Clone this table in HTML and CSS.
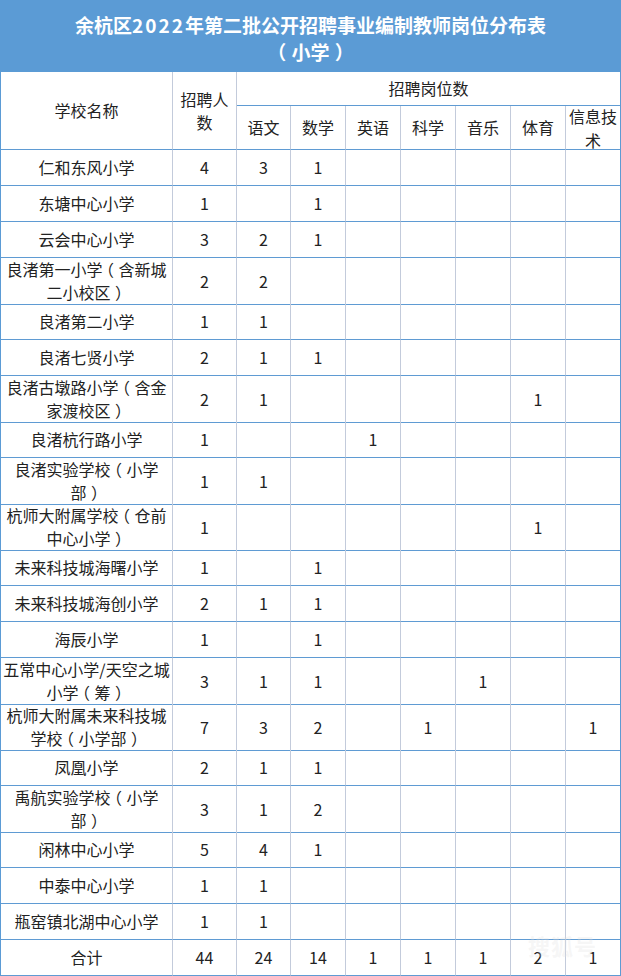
FILE: index.html
```html
<!DOCTYPE html>
<html lang="zh-CN">
<head>
<meta charset="utf-8">
<title>余杭区2022年第二批公开招聘事业编制教师岗位分布表（小学）</title>
<link rel="stylesheet" href="styles.css">
</head>
<body>
<div class="page">
  <header class="title">
    <div>余杭区<span class="num">2022</span>年第二批公开招聘事业编制教师岗位分布表</div>
    <div><span class="op">（</span>小学<span class="cp">）</span></div>
  </header>

  <div class="head">
    <div class="c h-name">学校名称</div>
    <div class="c h-total">招聘人<br>数</div>
    <div class="c h-group e">招聘岗位数</div>
    <div class="c">语文</div>
    <div class="c">数学</div>
    <div class="c">英语</div>
    <div class="c">科学</div>
    <div class="c">音乐</div>
    <div class="c">体育</div>
    <div class="c e h-it">信息技<br>术</div>
  </div>

  <div class="row"><div class="c">仁和东风小学</div><div class="c">4</div><div class="c">3</div><div class="c">1</div><div class="c"></div><div class="c"></div><div class="c"></div><div class="c"></div><div class="c e"></div></div>
  <div class="row"><div class="c">东塘中心小学</div><div class="c">1</div><div class="c"></div><div class="c">1</div><div class="c"></div><div class="c"></div><div class="c"></div><div class="c"></div><div class="c e"></div></div>
  <div class="row"><div class="c">云会中心小学</div><div class="c">3</div><div class="c">2</div><div class="c">1</div><div class="c"></div><div class="c"></div><div class="c"></div><div class="c"></div><div class="c e"></div></div>
  <div class="row tall"><div class="c"><span class="t">良渚第一小学<span class="op">（</span>含新城<br>二小校区<span class="cp">）</span></span></div><div class="c">2</div><div class="c">2</div><div class="c"></div><div class="c"></div><div class="c"></div><div class="c"></div><div class="c"></div><div class="c e"></div></div>
  <div class="row"><div class="c">良渚第二小学</div><div class="c">1</div><div class="c">1</div><div class="c"></div><div class="c"></div><div class="c"></div><div class="c"></div><div class="c"></div><div class="c e"></div></div>
  <div class="row"><div class="c">良渚七贤小学</div><div class="c">2</div><div class="c">1</div><div class="c">1</div><div class="c"></div><div class="c"></div><div class="c"></div><div class="c"></div><div class="c e"></div></div>
  <div class="row tall"><div class="c"><span class="t">良渚古墩路小学<span class="op">（</span>含金<br>家渡校区<span class="cp">）</span></span></div><div class="c">2</div><div class="c">1</div><div class="c"></div><div class="c"></div><div class="c"></div><div class="c"></div><div class="c">1</div><div class="c e"></div></div>
  <div class="row"><div class="c">良渚杭行路小学</div><div class="c">1</div><div class="c"></div><div class="c"></div><div class="c">1</div><div class="c"></div><div class="c"></div><div class="c"></div><div class="c e"></div></div>
  <div class="row tall"><div class="c"><span class="t">良渚实验学校<span class="op">（</span>小学<br>部<span class="cp">）</span></span></div><div class="c">1</div><div class="c">1</div><div class="c"></div><div class="c"></div><div class="c"></div><div class="c"></div><div class="c"></div><div class="c e"></div></div>
  <div class="row tall"><div class="c"><span class="t">杭师大附属学校<span class="op">（</span>仓前<br>中心小学<span class="cp">）</span></span></div><div class="c">1</div><div class="c"></div><div class="c"></div><div class="c"></div><div class="c"></div><div class="c"></div><div class="c">1</div><div class="c e"></div></div>
  <div class="row"><div class="c">未来科技城海曙小学</div><div class="c">1</div><div class="c"></div><div class="c">1</div><div class="c"></div><div class="c"></div><div class="c"></div><div class="c"></div><div class="c e"></div></div>
  <div class="row"><div class="c">未来科技城海创小学</div><div class="c">2</div><div class="c">1</div><div class="c">1</div><div class="c"></div><div class="c"></div><div class="c"></div><div class="c"></div><div class="c e"></div></div>
  <div class="row"><div class="c">海辰小学</div><div class="c">1</div><div class="c"></div><div class="c">1</div><div class="c"></div><div class="c"></div><div class="c"></div><div class="c"></div><div class="c e"></div></div>
  <div class="row tall"><div class="c"><span class="t">五常中心小学/天空之城<br>小学<span class="op">（</span>筹<span class="cp">）</span></span></div><div class="c">3</div><div class="c">1</div><div class="c">1</div><div class="c"></div><div class="c"></div><div class="c">1</div><div class="c"></div><div class="c e"></div></div>
  <div class="row tall"><div class="c"><span class="t">杭师大附属未来科技城<br>学校<span class="op">（</span>小学部<span class="cp">）</span></span></div><div class="c">7</div><div class="c">3</div><div class="c">2</div><div class="c"></div><div class="c">1</div><div class="c"></div><div class="c"></div><div class="c e">1</div></div>
  <div class="row"><div class="c">凤凰小学</div><div class="c">2</div><div class="c">1</div><div class="c">1</div><div class="c"></div><div class="c"></div><div class="c"></div><div class="c"></div><div class="c e"></div></div>
  <div class="row tall"><div class="c"><span class="t">禹航实验学校<span class="op">（</span>小学<br>部<span class="cp">）</span></span></div><div class="c">3</div><div class="c">1</div><div class="c">2</div><div class="c"></div><div class="c"></div><div class="c"></div><div class="c"></div><div class="c e"></div></div>
  <div class="row"><div class="c">闲林中心小学</div><div class="c">5</div><div class="c">4</div><div class="c">1</div><div class="c"></div><div class="c"></div><div class="c"></div><div class="c"></div><div class="c e"></div></div>
  <div class="row"><div class="c">中泰中心小学</div><div class="c">1</div><div class="c">1</div><div class="c"></div><div class="c"></div><div class="c"></div><div class="c"></div><div class="c"></div><div class="c e"></div></div>
  <div class="row"><div class="c">瓶窑镇北湖中心小学</div><div class="c">1</div><div class="c">1</div><div class="c"></div><div class="c"></div><div class="c"></div><div class="c"></div><div class="c"></div><div class="c e"></div></div>
  <div class="row total"><div class="c">合计</div><div class="c">44</div><div class="c">24</div><div class="c">14</div><div class="c">1</div><div class="c">1</div><div class="c">1</div><div class="c">2</div><div class="c e">1</div></div>

  <div class="watermark">搜狐号</div>
</div>
</body>
</html>
```

FILE: styles.css
```css
html, body {
  margin: 0;
  padding: 0;
  background: #ffffff;
}

.page {
  position: relative;
  width: 621px;
  font-family: "Noto Sans CJK SC", "Noto Sans", sans-serif;
  color: #222222;
  font-size: 16px;
}

.title {
  height: 72px;
  box-sizing: border-box;
  padding-top: 11px;
  background: #5b9bd5;
  color: #ffffff;
  font-weight: bold;
  font-size: 19px;
  line-height: 27px;
  text-align: center;
}

.title .num {
  letter-spacing: 2px;
}

/* centre the full-width brackets in their em box, as the reference font does */
.op {
  margin-left: -0.28em;
  margin-right: 0.28em;
}

.cp {
  margin-left: 0.28em;
  margin-right: -0.28em;
}

.head,
.row {
  display: grid;
  grid-template-columns: 172px 64px 54px repeat(6, 55px);
  border-left: 1px solid #5b9bd5;
}

.head {
  grid-template-rows: 34px 44px;
}

.row {
  height: 36px;
}

.row.tall {
  height: 46px;
}

.c {
  box-sizing: border-box;
  display: flex;
  align-items: center;
  justify-content: center;
  text-align: center;
  white-space: nowrap;
  line-height: 23px;
  border-right: 1px solid #c3cbdb;
  border-bottom: 1px solid #5f9bd3;
}

.t {
  display: block;
}

.c.e {
  border-right-color: #5f9bd3;
}

.h-name,
.h-total {
  grid-row: span 2;
}

.h-it {
  line-height: 24px;
}

.h-group {
  grid-column: span 7;
}

.watermark {
  position: absolute;
  left: 528px;
  top: 929px;
  font-size: 22px;
  font-weight: bold;
  color: rgba(225, 225, 225, 0.3);
  letter-spacing: 1px;
  pointer-events: none;
}
```
